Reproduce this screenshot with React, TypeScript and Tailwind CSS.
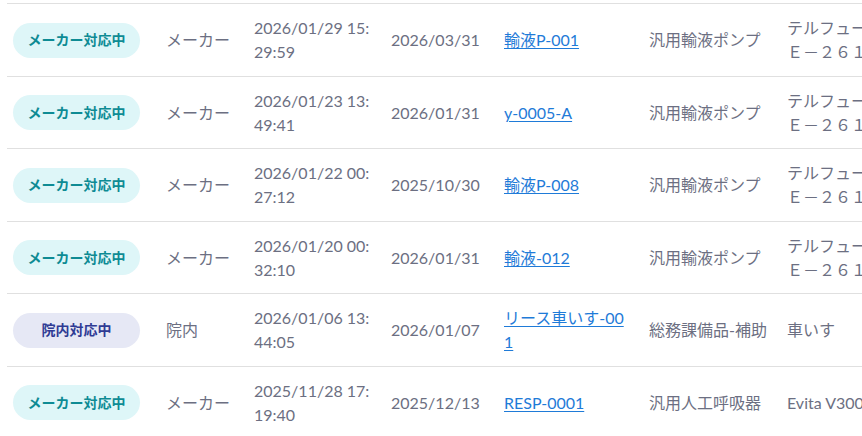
import { Fragment } from 'react'

type Row = {
  status: 'maker' | 'inhouse'
  owner: string
  received: [string, string]
  due: string
  asset: string[]
  category: string
  model: string[]
}

const rows: Row[] = [
  {
    status: 'maker',
    owner: 'メーカー',
    received: ['2026/01/29 15:', '29:59'],
    due: '2026/03/31',
    asset: ['輸液P-001'],
    category: '汎用輸液ポンプ',
    model: ['テルフュージョン', 'Ｅ－２６１Ｌ型'],
  },
  {
    status: 'maker',
    owner: 'メーカー',
    received: ['2026/01/23 13:', '49:41'],
    due: '2026/01/31',
    asset: ['y-0005-A'],
    category: '汎用輸液ポンプ',
    model: ['テルフュージョン', 'Ｅ－２６１Ｌ型'],
  },
  {
    status: 'maker',
    owner: 'メーカー',
    received: ['2026/01/22 00:', '27:12'],
    due: '2025/10/30',
    asset: ['輸液P-008'],
    category: '汎用輸液ポンプ',
    model: ['テルフュージョン', 'Ｅ－２６１Ｌ型'],
  },
  {
    status: 'maker',
    owner: 'メーカー',
    received: ['2026/01/20 00:', '32:10'],
    due: '2026/01/31',
    asset: ['輸液-012'],
    category: '汎用輸液ポンプ',
    model: ['テルフュージョン', 'Ｅ－２６１Ｌ型'],
  },
  {
    status: 'inhouse',
    owner: '院内',
    received: ['2026/01/06 13:', '44:05'],
    due: '2026/01/07',
    asset: ['リース車いす-00', '1'],
    category: '総務課備品-補助',
    model: ['車いす'],
  },
  {
    status: 'maker',
    owner: 'メーカー',
    received: ['2025/11/28 17:', '19:40'],
    due: '2025/12/13',
    asset: ['RESP-0001'],
    category: '汎用人工呼吸器',
    model: ['Evita V300'],
  },
]

function StatusBadge({ status }: { status: Row['status'] }) {
  if (status === 'inhouse') {
    return (
      <span className="inline-flex items-center justify-center w-[127px] h-[35px] rounded-full bg-[#e6e8f5] text-[#2f3b94] text-[14px] font-bold">
        院内対応中
      </span>
    )
  }
  return (
    <span className="inline-flex items-center justify-center w-[127px] h-[35px] rounded-full bg-[#def6f8] text-[#0e8b94] text-[14px] font-bold">
      メーカー対応中
    </span>
  )
}

function Lines({ parts }: { parts: string[] }) {
  return (
    <>
      {parts.map((p, i) => (
        <Fragment key={i}>
          {i > 0 && <br />}
          {p}
        </Fragment>
      ))}
    </>
  )
}

export default function App() {
  return (
    <div
      className="w-[862px] h-[436px] overflow-hidden bg-white text-[16px] text-[#6c6f82]"
      style={{ fontFamily: 'Lato, "Noto Sans CJK JP", sans-serif' }}
    >
      <div className="ml-[7px] mt-[3px] w-[1000px]">
        {rows.map((r, i) => (
          <div
            key={i}
            className={
              'grid grid-cols-[147px_88px_137px_113px_145px_138px_220px] items-center border-t border-[#e0e0e0] leading-6 ' +
              (i % 2 === 0 ? 'h-[73px]' : 'h-[72px]')
            }
          >
            <div className="pl-1.5">
              <StatusBadge status={r.status} />
            </div>
            <div className="pl-3 whitespace-nowrap">{r.owner}</div>
            <div className="pl-3 whitespace-nowrap">
              <Lines parts={r.received} />
            </div>
            <div className="pl-3 whitespace-nowrap">{r.due}</div>
            <div className="pl-3 whitespace-nowrap">
              <a href="#" className="text-[#1f7bd8] underline underline-offset-2">
                <Lines parts={r.asset} />
              </a>
            </div>
            <div className="pl-3 whitespace-nowrap">{r.category}</div>
            <div className="pl-3 whitespace-nowrap">
              <Lines parts={r.model} />
            </div>
          </div>
        ))}
      </div>
    </div>
  )
}
